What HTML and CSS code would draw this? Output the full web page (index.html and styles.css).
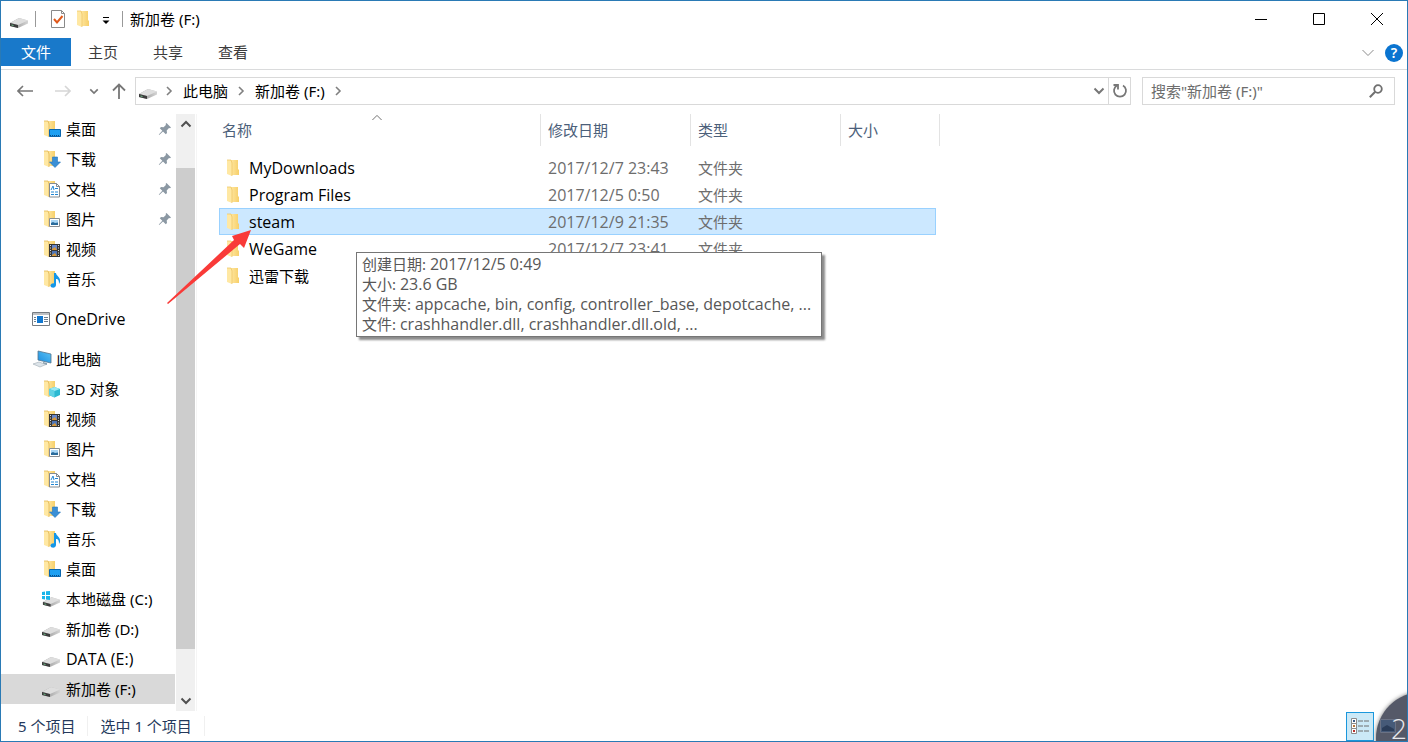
FILE: index.html
```html
<!DOCTYPE html>
<html lang="zh-CN">
<head>
<meta charset="utf-8">
<title>新加卷 (F:)</title>
<link rel="stylesheet" href="styles.css">
</head>
<body>
<svg class="defs" aria-hidden="true">
  <defs>
    <linearGradient id="gold" x1="0" x2="1"><stop offset="0" stop-color="#ffe9a6"/><stop offset="1" stop-color="#f7cf69"/></linearGradient>
    <linearGradient id="metal" x1="0" x2="1"><stop offset="0" stop-color="#8d8d8d"/><stop offset="1" stop-color="#d4d4d4"/></linearGradient>
    <linearGradient id="screen" x1="0" y1="1" x2="1" y2="0"><stop offset="0" stop-color="#1b8de0"/><stop offset="1" stop-color="#5cc3f5"/></linearGradient>
    <symbol id="folder" viewBox="0 0 14 18">
      <path d="M4 1h8v9l1 1v5H4z" fill="url(#gold)"/>
      <path d="M1 1h3l2 3v13l-5-2z" fill="#ffe8a3"/>
      <path d="M1 1h4l1 3v13" fill="none" stroke="#edc35e" stroke-width=".7"/>
    </symbol>
    <symbol id="nfolder" viewBox="0 0 18 18">
      <path d="M4 1h8v15H4z" fill="url(#gold)"/>
      <path d="M1 1h3l2 3v13l-5-2z" fill="#ffe8a3"/>
      <path d="M1 1h4l1 3v13" fill="none" stroke="#e2b650" stroke-width=".8"/>
    </symbol>
    <symbol id="desktop" viewBox="0 0 18 18"><use href="#nfolder"/><path d="M6.500 9.500h11v7h-11z" fill="#1ea0f2" stroke="#0b68b0"/><path d="M7 15.500h10" stroke="#074d86" stroke-dasharray="1 1"/></symbol>
    <symbol id="download" viewBox="0 0 18 18"><use href="#nfolder"/><path d="M9.500 7h5v5h3L12 17.500 6.500 12h3z" fill="#3a8fd6" stroke="#2476bc" stroke-width=".6"/></symbol>
    <symbol id="docs" viewBox="0 0 18 18"><use href="#nfolder"/><path d="M6.500 3.500h7l3 3v10.500h-10z" fill="#fff" stroke="#858b90"/><path d="M13.500 3.500v3h3" fill="none" stroke="#858b90"/><path d="M8 10l2-4 1 4M12 8.500h3M8 12h3m1 0h3M8 14.500h3m1 0h3" fill="none" stroke="#2387d2"/></symbol>
    <symbol id="pics" viewBox="0 0 18 18"><use href="#nfolder"/><path d="M6.500 8.500h10v8h-10z" fill="#fff" stroke="#8a8f94"/><path d="M8 10h7v5H8z" fill="#a9d6f5"/><path d="M8 15v-2l2-1 2 1 3-.500V15z" fill="#2b6c9c"/></symbol>
    <symbol id="video" viewBox="0 0 18 18"><use href="#nfolder"/><path d="M6 4h11v13H6z" fill="#373737"/><path d="M7.500 5v12M15.500 5v12" stroke="#ddd" stroke-dasharray="1 1.500"/><path d="M9 5h5v5H9z" fill="#6887c9"/><path d="M9 11h5v5H9z" fill="#4f75b5"/><path d="M9 9l3-2 2 3H9zM9 15l3-2 2 3H9z" fill="#d7983a"/></symbol>
    <symbol id="music" viewBox="0 0 18 18"><use href="#nfolder"/><path d="M11 3h2c0 3 5 4 4 9l-1 2c0-4-1-5-3-5v6c0 2-2 3-4 2.500-2-.500-2-3 0-4l2-.200z" fill="#1497e8"/></symbol>
    <symbol id="objects" viewBox="0 0 18 18"><use href="#nfolder"/><path d="M11.500 7l5.500 2v6l-5.500 2.500L6 15V9z" fill="#2bb9d2"/><path d="M6 9l5.500-2L17 9l-5.500 2z" fill="#9ae9f3"/><path d="M6 9l5.500 2v6.500L6 15z" fill="#5fd2e4"/></symbol>
    <symbol id="drive" viewBox="0 0 20 12"><path d="M1 6L10 1l9 2.500v3L9 11 1 9z" fill="url(#metal)"/><path d="M1 6l9-5 9 2.500L9 8z" fill="#dedede"/><path d="M1 6l8 2v3L1 9z" fill="#3c3c3c"/><path d="M2.500 8l2 .500" stroke="#7d9" stroke-width=".8"/></symbol>
    <symbol id="sysdrive" viewBox="0 0 20 18"><svg x="1" y="6" width="19" height="12"><use href="#drive"/></svg><path d="M1 2l3-.500V5H1zM5 1.300L9 1v4H5zM1 6h3v3.500L1 9zM5 6h4v4l-4-.400z" fill="#19b5ea"/></symbol>
    <symbol id="onedrive" viewBox="0 0 18 14"><path d="M.5.5h17v13H.5z" fill="#fff" stroke="#777c82"/><path d="M1 2h16" stroke="#a9adb1" stroke-width="1.500"/><path d="M5 4h6v7H5z" fill="#1278d0"/><path d="M2 5.500h2m-2 2h2m-2 2h2m8-4h4m-4 2h4m-4 2h4" stroke="#6e8090"/></symbol>
    <symbol id="pc" viewBox="0 0 20 18"><path d="M6 1l13 3v9L6 10z" fill="url(#screen)" stroke="#55748c" stroke-width=".8"/><path d="M11 12l4 1v2l-4-1z" fill="#8aa0b1"/><path d="M1 14l6-2 7 2.500L8 17z" fill="#dde4e9" stroke="#a0abb4" stroke-width=".6"/></symbol>
    <symbol id="pin" viewBox="0 0 14 14"><path d="M8.500 1L13 5.500l-1 .8-1-.2-2.300 2.400.3 2.500-1.200 1.200L5 9.500 1.200 13l-.4-.4L4.300 8.700 1.800 6.200 3 5l2.600.3L7.900 3l-.2-1.200z" fill="#8b98a3"/></symbol>
    <symbol id="chev" viewBox="0 0 10 10"><path d="M3 1l4 4-4 4" fill="none" stroke="#808080" stroke-width="1.600"/></symbol>
    <symbol id="down" viewBox="0 0 12 8"><path d="M1.500 1.500L6 6l4.500-4.500" fill="none" stroke="currentColor" stroke-width="2"/></symbol>
    <symbol id="thindown" viewBox="0 0 12 8"><path d="M.5 1L6 6.500 11.500 1" fill="none" stroke="currentColor"/></symbol>
    <symbol id="arrow" viewBox="0 0 16 14"><path d="M6 2L1 7l5 5M1 7h15" fill="none" stroke="currentColor" stroke-width="1.600"/></symbol>
  </defs>
</svg>

<div class="window">
  <header class="titlebar">
    <svg class="i-drive"><use href="#drive"/></svg>
    <span class="rule rule-first"></span>
    <button class="quick" aria-label="属性"><svg width="16" height="18" viewBox="0 0 16 18"><path d="M1.500.500h10l3 3v14h-13z" fill="#fff" stroke="#8a8a8a"/><path d="M11.500.500v3h3" fill="none" stroke="#8a8a8a"/><path d="M4 9l3 3.500L12.500 6" fill="none" stroke="#e0591b" stroke-width="2"/></svg></button>
    <button class="quick quick-folder" aria-label="新建文件夹"><svg class="i-folder"><use href="#folder"/></svg></button>
    <button class="quick quick-more" aria-label="自定义快速访问工具栏"><svg width="8" height="8" viewBox="0 0 8 8"><path d="M1 .5h6" stroke="#000"/><path d="M.5 3.500h7L4 7z"/></svg></button>
    <span class="rule rule-last"></span>
    <h1 class="title">新加卷 (F:)</h1>
    <div class="controls">
      <button aria-label="最小化"><svg width="12" height="12"><path d="M0 6.500h12" stroke="#000"/></svg></button>
      <button aria-label="最大化"><svg width="12" height="12"><path d="M.5.500h11v11H.5z" fill="none" stroke="#000"/></svg></button>
      <button aria-label="关闭"><svg width="12" height="12"><path d="M0 0l12 12M12 0L0 12" stroke="#000"/></svg></button>
    </div>
  </header>

  <nav class="ribbon">
    <button class="tab tab-file">文件</button>
    <button class="tab">主页</button>
    <button class="tab">共享</button>
    <button class="tab">查看</button>
    <button class="expand" aria-label="展开功能区"><svg class="i-thin"><use href="#thindown"/></svg></button>
    <button class="help" aria-label="帮助">?</button>
  </nav>

  <div class="toolbar">
    <div class="history">
      <button aria-label="后退"><svg class="i-arrow"><use href="#arrow"/></svg></button>
      <button class="off" aria-label="前进"><svg class="i-arrow flip"><use href="#arrow"/></svg></button>
      <button class="recent" aria-label="最近位置"><svg class="i-small"><use href="#down"/></svg></button>
      <button class="up" aria-label="上移"><svg width="14" height="16" viewBox="0 0 14 16"><path d="M1 7.500l6-6 6 6M7 2v14" fill="none" stroke="currentColor" stroke-width="1.800"/></svg></button>
    </div>
    <div class="address">
      <svg class="i-drive"><use href="#drive"/></svg>
      <svg class="i-chev"><use href="#chev"/></svg>
      <button class="crumb">此电脑</button>
      <svg class="i-chev"><use href="#chev"/></svg>
      <button class="crumb">新加卷 (F:)</button>
      <svg class="i-chev"><use href="#chev"/></svg>
      <button class="drop" aria-label="以前的位置"><svg class="i-down"><use href="#down"/></svg></button>
      <button class="refresh" aria-label="刷新"><svg width="16" height="16" viewBox="0 0 16 16"><path d="M11 2.500A6 6 0 1 1 5 2.500" fill="none" stroke="#777" stroke-width="1.800"/><path d="M1.500 2H6v4.500" fill="none" stroke="#777" stroke-width="1.800"/></svg></button>
    </div>
    <label class="search">
      <input type="text" placeholder="搜索&quot;新加卷 (F:)&quot;" aria-label="搜索">
      <svg width="14" height="14" viewBox="0 0 14 14"><circle cx="9" cy="5" r="3.800" fill="none" stroke="#707070" stroke-width="1.800"/><path d="M6.200 7.800L.8 13.200" stroke="#707070" stroke-width="2"/></svg>
    </label>
  </div>

  <div class="body">
    <nav class="tree">
      <div class="group">
        <a class="node child" href="#"><svg class="i-nav"><use href="#desktop"/></svg>桌面<svg class="i-pin"><use href="#pin"/></svg></a>
        <a class="node child" href="#"><svg class="i-nav"><use href="#download"/></svg>下载<svg class="i-pin"><use href="#pin"/></svg></a>
        <a class="node child" href="#"><svg class="i-nav"><use href="#docs"/></svg>文档<svg class="i-pin"><use href="#pin"/></svg></a>
        <a class="node child" href="#"><svg class="i-nav"><use href="#pics"/></svg>图片<svg class="i-pin"><use href="#pin"/></svg></a>
        <a class="node child" href="#"><svg class="i-nav"><use href="#video"/></svg>视频</a>
        <a class="node child" href="#"><svg class="i-nav"><use href="#music"/></svg>音乐</a>
      </div>
      <div class="group">
        <a class="node" href="#"><svg class="i-one"><use href="#onedrive"/></svg><span class="latin">OneDrive</span></a>
      </div>
      <div class="group">
        <a class="node pc" href="#"><svg class="i-pc"><use href="#pc"/></svg>此电脑</a>
        <a class="node child" href="#"><svg class="i-nav"><use href="#objects"/></svg>3D 对象</a>
        <a class="node child" href="#"><svg class="i-nav"><use href="#video"/></svg>视频</a>
        <a class="node child" href="#"><svg class="i-nav"><use href="#pics"/></svg>图片</a>
        <a class="node child" href="#"><svg class="i-nav"><use href="#docs"/></svg>文档</a>
        <a class="node child" href="#"><svg class="i-nav"><use href="#download"/></svg>下载</a>
        <a class="node child" href="#"><svg class="i-nav"><use href="#music"/></svg>音乐</a>
        <a class="node child" href="#"><svg class="i-nav"><use href="#desktop"/></svg>桌面</a>
        <a class="node disk" href="#"><svg class="i-sys"><use href="#sysdrive"/></svg>本地磁盘 (C:)</a>
        <a class="node disk" href="#"><svg class="i-disk"><use href="#drive"/></svg>新加卷 (D:)</a>
        <a class="node disk" href="#"><svg class="i-disk"><use href="#drive"/></svg><span class="latin">DATA (E:)</span></a>
        <a class="node disk current" href="#"><svg class="i-disk"><use href="#drive"/></svg>新加卷 (F:)</a>
      </div>
    </nav>
    <div class="scroll">
      <button aria-label="向上滚动"><svg class="i-down turn"><use href="#down"/></svg></button>
      <span class="before"></span><span class="thumb"></span><span class="after"></span>
      <button aria-label="向下滚动"><svg class="i-down"><use href="#down"/></svg></button>
    </div>
    <main class="files">
      <table class="list">
        <colgroup><col class="c-name"><col class="c-mid"><col class="c-mid"><col class="c-size"><col class="c-tail"></colgroup>
        <thead>
          <tr>
            <th class="name"><button>名称</button><svg class="sort turn"><use href="#thindown"/></svg></th>
            <th><button>修改日期</button></th>
            <th><button>类型</button></th>
            <th colspan="2"><button>大小</button></th>
          </tr>
        </thead>
        <tbody>
          <tr class="spacer"><td colspan="5"></td></tr>
          <tr><td><div class="file latin"><svg class="i-folder"><use href="#folder"/></svg>MyDownloads</div></td><td class="latin">2017/12/7 23:43</td><td>文件夹</td><td></td></tr>
          <tr><td><div class="file latin"><svg class="i-folder"><use href="#folder"/></svg>Program Files</div></td><td class="latin">2017/12/5 0:50</td><td>文件夹</td><td></td></tr>
          <tr class="selected"><td><div class="file latin"><svg class="i-folder"><use href="#folder"/></svg>steam</div></td><td class="latin">2017/12/9 21:35</td><td>文件夹</td><td></td></tr>
          <tr><td><div class="file latin"><svg class="i-folder"><use href="#folder"/></svg>WeGame</div></td><td class="latin">2017/12/7 23:41</td><td>文件夹</td><td></td></tr>
          <tr><td><div class="file"><svg class="i-folder"><use href="#folder"/></svg>迅雷下载</div></td><td></td><td></td><td></td></tr>
        </tbody>
      </table>
      <div class="tooltip" role="tooltip">
        <div>创建日期: <span class="latin">2017/12/5 0:49</span></div>
        <div>大小: <span class="latin">23.6 GB</span></div>
        <div>文件夹: <span class="latin">appcache, bin, config, controller_base, depotcache, ...</span></div>
        <div>文件: <span class="latin">crashhandler.dll, crashhandler.dll.old, ...</span></div>
      </div>
      <svg class="pointer" viewBox="0 0 86 74"><path d="M0 73L67 10l-2-4L84 0 77 18l-4-4L1 74z" fill="#f93a38"/></svg>
    </main>
  </div>

  <footer class="status">
    <span class="count">5 个项目</span>
    <span class="count">选中 1 个项目</span>
    <button class="details" aria-label="详细信息"><svg width="20" height="18" viewBox="0 0 20 18"><path d="M1.500 1.500h5v5h-5zM1.500 6.500h5v5h-5zM1.500 11.500h5v5h-5z" fill="#fff" stroke="#8b8b8b"/><path d="M3 3h2v2H3z" fill="#3a5a86"/><path d="M3 8h2v2H3z" fill="#b9793c"/><path d="M3 13h2v2H3z" fill="#b8302c"/><path d="M8 4h5m1 0h5M8 9h5m1 0h5M8 14h5m1 0h5" stroke="#6f6f6f"/></svg></button>
  </footer>
  <div class="bubble"><svg width="16" height="14" viewBox="0 0 16 14"><path d="M.5.500h15v13H.5z" fill="#465a78" stroke="#6b7284"/><path d="M2 9l5-3 7 4v2H2z" fill="#2b3d59"/></svg><span>2</span></div>
</div>
</body>
</html>
```
FILE: styles.css
```css
* { box-sizing: border-box; }
body {
  margin: 0;
  font: 15px/20px "Noto Sans", "Noto Sans CJK SC", sans-serif;
  color: #000;
}
button {
  display: flex;
  align-items: center;
  justify-content: center;
  margin: 0;
  padding: 0;
  border: 0;
  background: none;
  font: inherit;
  color: inherit;
}
svg { display: block; flex: none; }
.defs { position: absolute; width: 0; height: 0; }
.latin { font-family: "Open Sans", "Noto Sans", sans-serif; font-size: 16px; }

.window {
  position: relative;
  display: flex;
  flex-direction: column;
  height: 100vh;
  overflow: hidden;
  border: 1px solid #2a7ab5;
  background: #fff;
}

.i-drive { width: 20px; height: 12px; }
.i-folder { width: 14px; height: 18px; }
.i-thin { width: 12px; height: 8px; }
.i-arrow { width: 16px; height: 14px; }
.i-small { width: 10px; height: 7px; }
.i-down { width: 12px; height: 8px; }
.i-chev { width: 10px; height: 10px; }
.i-nav { width: 18px; height: 18px; }
.i-one { width: 18px; height: 14px; }
.i-pc { width: 20px; height: 18px; }
.i-sys { width: 20px; height: 18px; }
.i-disk { width: 20px; height: 12px; margin-top: 6px; }
.i-pin { width: 14px; height: 14px; margin-left: auto; }
.flip { transform: scaleX(-1); }
.turn { transform: rotate(180deg); }

.titlebar {
  display: flex;
  align-items: center;
  height: 37px;
  padding: 0 1px 2px 8px;
}
.titlebar .i-drive { margin-top: 8px; }
.rule { width: 1px; height: 16px; background: #999; }
.rule-first { margin: 0 14px 0 6px; }
.quick-folder { margin: 0 12px 0 10px; }
.quick-more { margin-top: 4px; }
.rule-last { margin: 0 7px 0 12px; }
.title { margin: 0; font-size: 15px; font-weight: 400; }
.controls { display: flex; align-self: stretch; margin-left: auto; }
.controls button { width: 58px; }

.ribbon {
  display: flex;
  align-items: center;
  height: 32px;
  padding: 0 4px 1px 0;
  border-bottom: 1px solid #dadbdc;
}
.tab { height: 28px; padding: 0 18px 0 17px; color: #3c3c3c; align-self: flex-start; }
.tab-file { width: 70px; padding: 0; background: #1979ca; color: #fff; }
.expand { margin: 0 11px 0 auto; color: #8a8a8a; }
.help {
  width: 18px;
  height: 18px;
  border-radius: 50%;
  background: #0a74d0;
  color: #fff;
  font-weight: 600;
  font-size: 14px;
}

.toolbar {
  display: flex;
  align-items: center;
  height: 44px;
  padding: 0 12px 2px 16px;
}
.history { display: flex; align-items: center; width: 118px; color: #777; }
.history .off { margin-left: 22px; color: #d6d6d6; }
.history .recent { margin-left: 18px; }
.history .up { margin-left: 13px; }
.address {
  display: flex;
  align-items: center;
  flex: 1;
  height: 28px;
  padding-left: 2px;
  border: 1px solid #d9d9d9;
}
.address .i-drive { margin: 5px 6px 0 0; }
.crumb { margin: 0 8px 0 9px; }
.drop { margin-left: auto; padding-right: 3px; color: #777; }
.refresh { width: 22px; height: 26px; border-left: 1px solid #d9d9d9; }
.search {
  display: flex;
  align-items: center;
  width: 253px;
  height: 28px;
  margin-left: 11px;
  padding: 0 11px 0 8px;
  border: 1px solid #d9d9d9;
}
.search input {
  flex: 1;
  min-width: 0;
  padding: 0;
  border: 0;
  outline: 0;
  background: none;
  font: inherit;
}
.search input::placeholder { color: #6d6d6d; opacity: 1; }

.body { display: flex; flex: 1; min-height: 0; }
.tree { width: 174px; overflow: hidden; }
.group { margin-bottom: 10px; }
.node {
  display: flex;
  align-items: center;
  gap: 5px;
  height: 30px;
  padding: 0 3px 0 31px;
  color: #000;
  text-decoration: none;
}
.pc { gap: 4px; }
.child { padding-left: 42px; }
.disk { padding-left: 40px; }
.current { background: #d9d9d9; }

.scroll {
  display: flex;
  flex-direction: column;
  width: 19px;
  margin: 0 1px;
  background: #f0f0f0;
  color: #505050;
}
.scroll button { height: 20px; }
.before { flex: 34; }
.thumb { flex: 481; background: #cdcdcd; }
.after { flex: 42; }

.files { position: relative; flex: 1; padding-left: 22px; border-left: 1px solid #f5f5f5; }
.list {
  width: 721px;
  border-spacing: 0;
  table-layout: fixed;
}
.c-name { width: 322px; }
.c-mid { width: 150px; }
.c-size { width: 95px; }
.c-tail { width: 4px; }
.list th {
  position: relative;
  height: 32px;
  padding: 0 7px;
  border-right: 1px solid #e3e3e3;
  color: #4c607a;
  font-weight: 400;
}
.list .name { padding-left: 3px; }
.sort { position: absolute; left: 153px; top: 0; width: 10px; height: 7px; color: #555; }
.list td { height: 27px; padding: 0 7px; color: #6d6d6d; }
.list td:first-child { padding-left: 7px; color: #000; }
.list .spacer td { height: 8px; padding: 0; }
.file { display: flex; align-items: center; gap: 9px; }
.selected td { background: #cce8ff; border: solid #99d1ff; border-width: 1px 0; }
.list .selected td:first-child { border-left-width: 1px; padding-left: 6px; }
.selected td:last-child { border-right-width: 1px; }

.tooltip {
  position: absolute;
  left: 159px;
  top: 138px;
  padding: 1px 10px 2px 5px;
  border: 1px solid #767676;
  background: #fff;
  box-shadow: 3px 3px 2px #8c8c8c;
  color: #575757;
  white-space: nowrap;
}
.tooltip div { height: 20px; }
.pointer { position: absolute; left: -30px; top: 116px; width: 86px; height: 74px; }

.status {
  display: flex;
  align-items: center;
  height: 30px;
  padding: 0 33px 0 17px;
  color: #24395c;
}
.count { margin-right: 12px; padding-right: 12px; border-right: 1px solid #f0f0f0; }
.details { width: 28px; height: 29px; margin-left: auto; border: 1px solid #1a97dc; background: #cbe9f7; }

.bubble {
  position: absolute;
  right: -61px;
  bottom: -43px;
  width: 92px;
  height: 92px;
  border-radius: 50%;
  background: #555968;
  box-shadow: 0 0 4px #777;
  color: #e8e8ec;
}
.bubble svg { position: absolute; left: 4px; top: 27px; }
.bubble span {
  position: absolute;
  left: 15px;
  top: 24px;
  font-family: "Open Sans", sans-serif;
  font-size: 28px;
  font-weight: 300;
  line-height: 24px;
}
```
